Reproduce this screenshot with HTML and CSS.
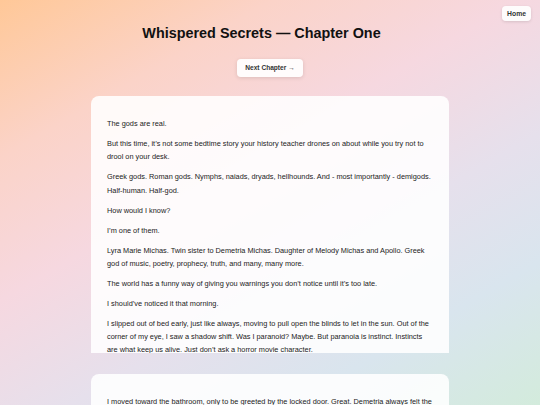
FILE: index.html
```html
<!DOCTYPE html>
<html lang="en">
<head>
<meta charset="utf-8">
<title>Whispered Secrets — Chapter One</title>
<link rel="stylesheet" href="styles.css">
</head>
<body>
<nav class="topbar"><a class="home-btn" href="#">Home</a></nav>
<h1 class="title">Whispered Secrets — Chapter One</h1>
<div class="actions"><a class="next-btn" href="#">Next Chapter →</a></div>
<main class="pages">
  <section class="page">
    <p>The gods are real.</p>
    <p>But this time, it’s not some bedtime story your history teacher drones on about while you try not to drool on your desk.</p>
    <p>Greek gods. Roman gods. Nymphs, naiads, dryads, hellhounds. And - most importantly - demigods. Half-human. Half-god.</p>
    <p>How would I know?</p>
    <p>I’m one of them.</p>
    <p>Lyra Marie Michas. Twin sister to Demetria Michas. Daughter of Melody Michas and Apollo. Greek god of music, poetry, prophecy, truth, and many, many more.</p>
    <p>The world has a funny way of giving you warnings you don’t notice until it’s too late.</p>
    <p>I should’ve noticed it that morning.</p>
    <p>I slipped out of bed early, just like always, moving to pull open the blinds to let in the sun. Out of the corner of my eye, I saw a shadow shift. Was I paranoid? Maybe. But paranoia is instinct. Instincts are what keep us alive. Just don’t ask a horror movie character.</p>
  </section>
  <section class="page">
    <p>I moved toward the bathroom, only to be greeted by the locked door. Great. Demetria always felt the need to take forever in there, as if the mirror would change its mind about her.</p>
  </section>
</main>
</body>
</html>
```
FILE: styles.css
```css
* { box-sizing: border-box; }
html, body { margin: 0; padding: 0; }
body {
  height: 405px;
  font-family: "Liberation Sans", Arial, sans-serif;
  color: #222;
  background: linear-gradient(150deg, #ffc898 0%, #fbd3c8 22%, #f6d8e0 42%, #e6e0ec 62%, #d9e5ee 80%, #d3ebdc 100%);
  overflow: hidden;
}
.topbar {
  display: flex;
  justify-content: flex-end;
  padding: 6px 9px 0;
}
.home-btn {
  display: inline-block;
  height: 15px;
  line-height: 15px;
  padding: 0 5px;
  font-size: 6.8px;
  font-weight: bold;
  color: #333;
  text-decoration: none;
  background: rgba(255,255,255,0.9);
  border-radius: 4px;
  box-shadow: 0 1px 3px rgba(0,0,0,0.12);
}
.title {
  margin: 2px 0 0;
  padding-right: 17px;
  text-align: center;
  font-size: 14.4px;
  line-height: 20px;
  font-weight: bold;
  color: #111;
}
.actions {
  display: flex;
  justify-content: center;
  margin-top: 16px;
}
.next-btn {
  display: inline-block;
  height: 18px;
  line-height: 18px;
  padding: 0 8px;
  font-size: 6.6px;
  font-weight: bold;
  color: #333;
  text-decoration: none;
  background: rgba(255,255,255,0.92);
  border-radius: 4px;
  box-shadow: 0 1px 4px rgba(0,0,0,0.12);
}
.pages {
  display: flex;
  flex-direction: column;
  align-items: center;
  gap: 21px;
  margin-top: 19px;
}
.page {
  flex: none;
  width: 358px;
  height: 257px;
  overflow: hidden;
  padding: 21px 16px 0;
  background: rgba(255,255,255,0.88);
  border-radius: 8px 8px 0 0;
  font-size: 7.35px;
  line-height: 13.3px;
}
.page p { margin: 0 0 6.7px; }
```
